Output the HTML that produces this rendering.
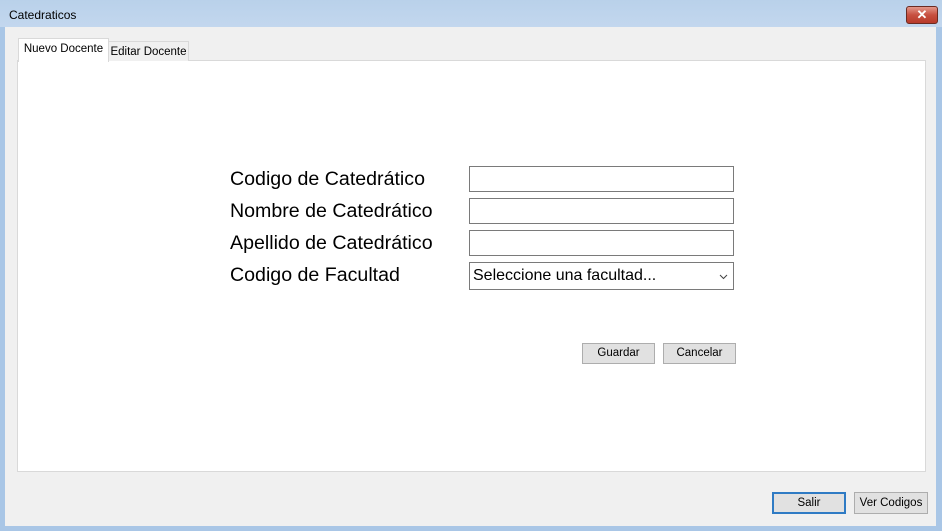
<!DOCTYPE html>
<html><head><style>
body{margin:0;width:942px;height:531px;overflow:hidden;font-family:"Liberation Sans",sans-serif;background:#a9c6e6;position:relative}
.t{position:absolute}
#title{left:0;top:0;width:942px;height:27px;background:linear-gradient(#b9d1ea,#c3d7ee)}
#client{left:5px;top:27px;width:931px;height:499px;background:#f0f0f0}
.lab{position:absolute;left:230px;font-size:19.6px;color:#000;white-space:nowrap}
.inp{position:absolute;left:469px;width:263px;height:24px;background:#fff;border:1px solid #7a7a7a}
.btn{position:absolute;height:19px;background:#e1e1e1;border:1px solid #adadad;font-size:11.5px;text-align:center;line-height:19px;box-sizing:content-box;white-space:nowrap}
</style></head><body>
<div class="t" id="title"></div>
<div class="t" style="left:9px;top:8px;font-size:12px;color:#000">Catedraticos</div>
<div class="t" style="left:906px;top:6px;width:30px;height:16px;border-radius:3px;border:1px solid #6b2b22;background:linear-gradient(#e3988a,#c75040 50%,#b83a2a);color:#fff;font-size:13px;font-weight:bold;text-align:center;line-height:16px">✕</div>
<div class="t" id="client"></div>
<div class="t" style="left:17px;top:60px;width:907px;height:410px;background:#fff;border:1px solid #d9d9d9"></div>
<div class="t" style="left:108px;top:41px;width:79px;height:19px;background:#f0f0f0;border:1px solid #d9d9d9;border-bottom:none;font-size:11.5px;line-height:20px;text-align:center;white-space:nowrap">Editar Docente</div>
<div class="t" style="left:18px;top:38px;width:89px;height:23px;background:#fff;border:1px solid #d9d9d9;border-bottom:none;font-size:11.5px;line-height:21px;text-align:center;white-space:nowrap">Nuevo Docente</div>
<div class="lab" style="top:168px">Codigo de Catedrático</div>
<div class="lab" style="top:200px">Nombre de Catedrático</div>
<div class="lab" style="top:232px">Apellido de Catedrático</div>
<div class="lab" style="top:264px">Codigo de Facultad</div>
<div class="inp" style="top:166px"></div>
<div class="inp" style="top:198px"></div>
<div class="inp" style="top:230px"></div>
<div class="inp" style="top:262px;height:26px;font-size:16px;line-height:26px;padding-left:3px;width:260px;white-space:nowrap">Seleccione una facultad...<svg style="position:absolute;right:5px;top:11px" width="9" height="6"><path d="M1 1L4.5 4.5L8 1" stroke="#444" fill="none"/></svg></div>
<div class="btn" style="left:582px;top:343px;width:71px">Guardar</div>
<div class="btn" style="left:663px;top:343px;width:71px">Cancelar</div>
<div class="btn" style="left:772px;top:492px;width:70px;height:18px;border:2px solid #2f7bc4;line-height:18px">Salir</div>
<div class="btn" style="left:854px;top:492px;width:72px;height:20px;line-height:20px">Ver Codigos</div>
</body></html>
